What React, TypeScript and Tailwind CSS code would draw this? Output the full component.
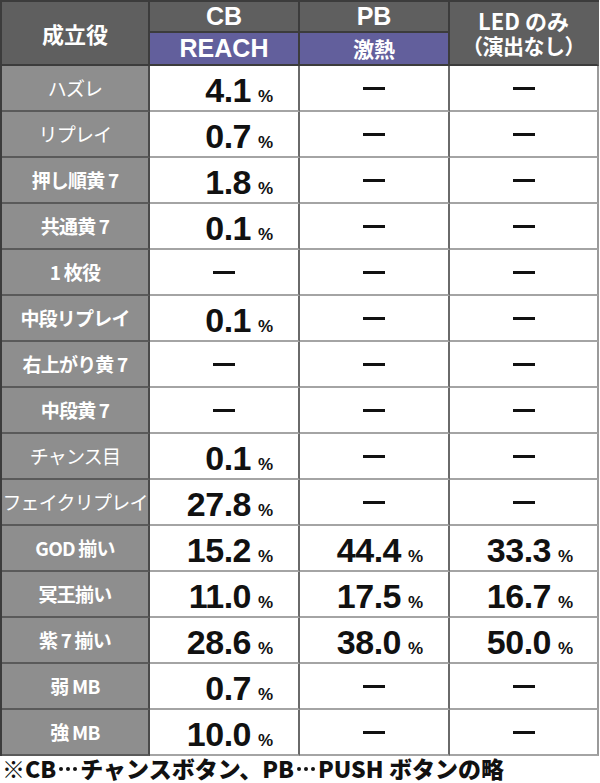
import React from "react";

const JP = "font-['Noto_Sans_CJK_JP','Noto_Sans',sans-serif]";
const NUM = "font-['Liberation_Sans','Noto_Sans_CJK_JP',sans-serif]";

type Row = { label: string; bold: boolean; v: (string | null)[] };

const rows: Row[] = [
  { label: "ハズレ", bold: false, v: ["4.1", null, null] },
  { label: "リプレイ", bold: false, v: ["0.7", null, null] },
  { label: "押し順黄 7", bold: true, v: ["1.8", null, null] },
  { label: "共通黄 7", bold: true, v: ["0.1", null, null] },
  { label: "1 枚役", bold: true, v: [null, null, null] },
  { label: "中段リプレイ", bold: true, v: ["0.1", null, null] },
  { label: "右上がり黄 7", bold: true, v: [null, null, null] },
  { label: "中段黄 7", bold: true, v: [null, null, null] },
  { label: "チャンス目", bold: false, v: ["0.1", null, null] },
  { label: "フェイクリプレイ", bold: false, v: ["27.8", null, null] },
  { label: "GOD 揃い", bold: true, v: ["15.2", "44.4", "33.3"] },
  { label: "冥王揃い", bold: true, v: ["11.0", "17.5", "16.7"] },
  { label: "紫 7 揃い", bold: true, v: ["28.6", "38.0", "50.0"] },
  { label: "弱 MB", bold: true, v: ["0.7", null, null] },
  { label: "強 MB", bold: true, v: ["10.0", null, null] },
];

function ValueCell({ v, last }: { v: string | null; last: boolean }) {
  return (
    <div
      className={`h-[46px] bg-white border-b-2 border-b-[#a4a4a4] ${
        last ? "border-r-2 border-r-[#9a9a9a]" : "border-r-2 border-r-[#6a6a6a]"
      } relative`}
    >
      {v === null ? (
        <div className="absolute inset-0 flex items-center justify-center">
          <div className="w-[22px] h-[3px] bg-[#111]" />
        </div>
      ) : (
        <div className="flex items-baseline h-full pt-[7px]">
          <span
            className={`${NUM} w-[101px] text-right text-[34px] font-bold text-[#111] tracking-[-0.5px] leading-none`}
          >
            {v}
          </span>
          <span className={`${NUM} ml-[7px] text-[17px] font-bold text-[#111] leading-none`}>%</span>
        </div>
      )}
    </div>
  );
}

function Dots() {
  return (
    <span className="relative -top-[7px] inline-flex items-end gap-[3px] mx-[3px]">
      <span className="block w-[4px] h-[4px] rounded-full bg-[#111]" />
      <span className="block w-[4px] h-[4px] rounded-full bg-[#111]" />
      <span className="block w-[4px] h-[4px] rounded-full bg-[#111]" />
    </span>
  );
}

export default function App() {
  return (
    <div className="w-[600px] h-[783px] bg-white overflow-hidden">
      <div className="w-[599px] border-l-2 border-l-[#3c3c3c] border-t-2 border-t-[#3c3c3c]">
        <div className="grid grid-cols-[148px_150px_150px_149px]">
          {/* header */}
          <div className="row-span-2 h-[64px] bg-[#5f5f5f] border-r-2 border-r-[#3c3c3c] border-b-2 border-b-[#3c3c3c] flex items-center justify-center">
            <span className={`${JP} text-white font-bold text-[22px]`}>成立役</span>
          </div>
          <div className="h-[29px] bg-[#5f5f5f] border-r-2 border-r-[#3c3c3c] flex items-center justify-center">
            <span className={`${NUM} text-white font-bold text-[25px] leading-none`}>CB</span>
          </div>
          <div className="h-[29px] bg-[#5f5f5f] border-r-2 border-r-[#3c3c3c] flex items-center justify-center">
            <span className={`${NUM} text-white font-bold text-[25px] leading-none`}>PB</span>
          </div>
          <div className="row-span-2 h-[64px] bg-[#5f5f5f] border-r-2 border-r-[#5f5f5f] border-b-2 border-b-[#3c3c3c] flex flex-col items-center justify-center gap-[2px]">
            <span className={`${JP} text-white font-bold text-[22px] leading-[23px]`}>LED のみ</span>
            <span className={`${JP} text-white font-bold text-[21px] leading-[23px] tracking-[-0.5px]`}>（演出なし）</span>
          </div>
          <div className="h-[35px] bg-[#625f9c] border-t-2 border-t-[#3c3c3c] border-r-2 border-r-[#3c3c3c] border-b-2 border-b-[#3c3c3c] flex items-center justify-center">
            <span className={`${NUM} text-white font-bold text-[25px] leading-none`}>REACH</span>
          </div>
          <div className="h-[35px] bg-[#625f9c] border-t-2 border-t-[#3c3c3c] border-r-2 border-r-[#3c3c3c] border-b-2 border-b-[#3c3c3c] flex items-center justify-center">
            <span className={`${JP} text-white font-bold text-[21px] leading-none`}>激熱</span>
          </div>

          {rows.map((r, i) => (
            <React.Fragment key={i}>
              <div className="h-[46px] bg-[#8e8e8e] border-r-2 border-r-[#4a4a4a] border-b-2 border-b-[#5a5a5a] flex items-center justify-center">
                <span
                  className={`${JP} text-white text-[19px] ${r.bold ? "font-bold" : "font-normal"} tracking-[-0.8px] whitespace-nowrap`}
                >
                  {r.label}
                </span>
              </div>
              <ValueCell v={r.v[0]} last={false} />
              <ValueCell v={r.v[1]} last={false} />
              <ValueCell v={r.v[2]} last={true} />
            </React.Fragment>
          ))}
        </div>
      </div>
      <div className={`${JP} pl-[2px] text-[23px] font-black text-[#111] leading-[24px] tracking-[0px] whitespace-nowrap`}>
        ※CB<Dots />チャンスボタン、PB<Dots />PUSH ボタンの略
      </div>
    </div>
  );
}
